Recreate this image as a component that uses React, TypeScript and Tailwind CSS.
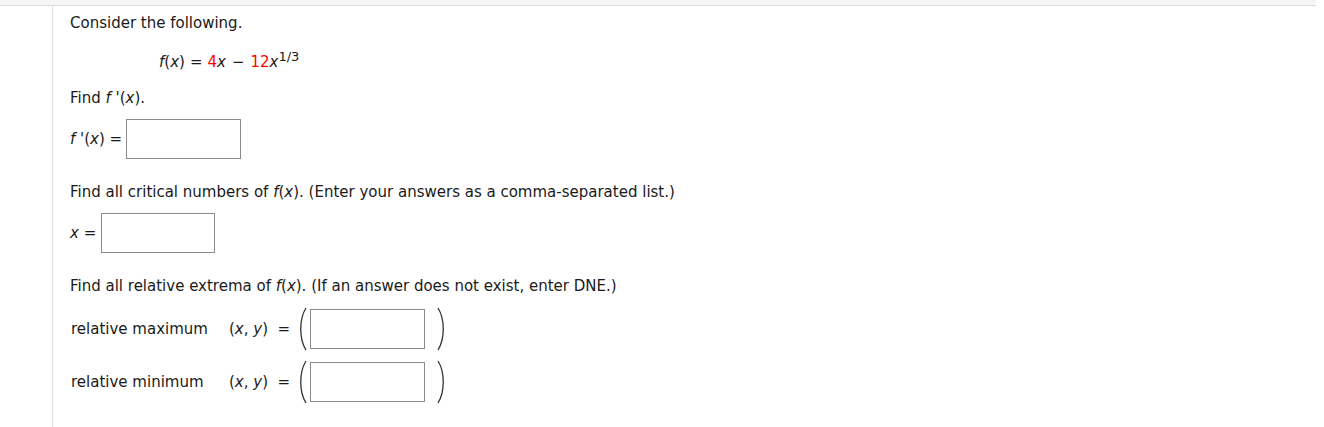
import React from "react";

const font = { fontFamily: '"DejaVu Sans", Verdana, sans-serif' };

const Box = ({ w = "w-[115px]" }: { w?: string }) => (
  <div className={`${w} h-[40px] border border-[#8a8a8a] bg-white`} />
);

const Paren = ({ right }: { right?: boolean }) => (
  <svg width="12" height="44" viewBox="0 0 12 44" className="shrink-0">
    <path
      d={right ? "M3 1 C10 12, 10 32, 3 43" : "M9 1 C2 12, 2 32, 9 43"}
      fill="none"
      stroke="#333"
      strokeWidth="1.3"
    />
  </svg>
);

const PointRow = ({ label, mt }: { label: string; mt: string }) => (
  <div className={`flex items-center ${mt} pl-[1px]`}>
    <span className="w-[158px]">{label}</span>
    <span className="w-[68px] whitespace-nowrap">
      (<i>x</i>, <i>y</i>) &nbsp;=
    </span>
    <Paren />
    <div className="ml-[1px]">
      <Box />
    </div>
    <div className="ml-[10px]">
      <Paren right />
    </div>
  </div>
);

export default function App() {
  return (
    <div className="w-[1324px] h-[427px] bg-white text-[#1a1a1a] text-[15px] leading-[18px]" style={font}>
      <div className="w-[1316px] h-[6px] bg-[#f5f5f5] border-b border-[#dcdcdc]" />
      <div className="ml-[52px] h-[421px] border-l border-[#dcdcdc] pl-[17px] pt-[8px]">
        <p>Consider the following.</p>
        <p className="mt-[21px] pl-[89px] whitespace-nowrap">
          <i>f</i>(<i>x</i>)<span className="mx-[5px]">=</span>
          <span className="text-[#ff0000]">4</span>
          <i>x</i>
          <span className="mx-[6px]">−</span>
          <span className="text-[#ff0000]">12</span>
          <i>x</i>
          <sup className="text-[13px] relative -top-[6px]">1/3</sup>
        </p>
        <p className="mt-[18px]">
          Find <i>f</i> '(<i>x</i>).
        </p>
        <div className="flex items-center mt-[12px]">
          <span className="w-[56px] whitespace-nowrap">
            <i>f</i> '(<i>x</i>) =
          </span>
          <Box />
        </div>
        <p className="mt-[24px]">
          Find all critical numbers of <i>f</i>(<i>x</i>). (Enter your answers as a comma-separated list.)
        </p>
        <div className="flex items-center mt-[12px]">
          <span className="w-[31px]">
            <i>x</i> =
          </span>
          <Box w="w-[114px]" />
        </div>
        <p className="mt-[24px]">
          Find all relative extrema of <i>f</i>(<i>x</i>). (If an answer does not exist, enter DNE.)
        </p>
        <PointRow label="relative maximum" mt="mt-[12px]" />
        <PointRow label="relative minimum" mt="mt-[9px]" />
      </div>
    </div>
  );
}
